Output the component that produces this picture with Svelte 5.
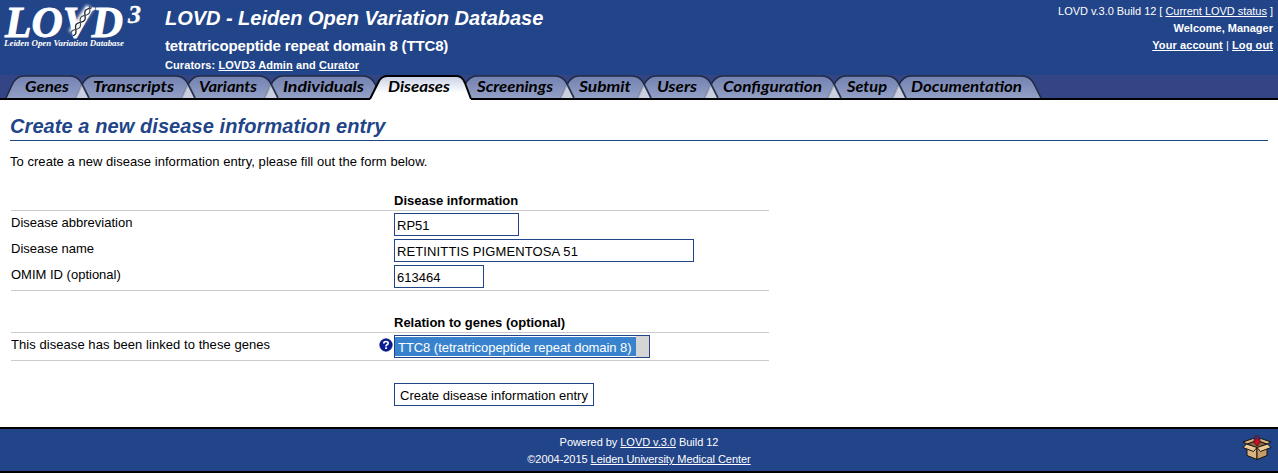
<script>
  const tabs = [
    { label: 'Genes', w: 70, tx: 13, tw: 44 },
    { label: 'Transcripts', w: 106, tx: 11, tw: 81 },
    { label: 'Variants', w: 83, tx: 11, tw: 58 },
    { label: 'Individuals', w: 104, tx: 12, tw: 81 },
    { label: 'Diseases', w: 90, tx: 13, tw: 62, active: true },
    { label: 'Screenings', w: 102, tx: 12, tw: 76 },
    { label: 'Submit', w: 77, tx: 12, tw: 52 },
    { label: 'Users', w: 67, tx: 13, tw: 40 },
    { label: 'Configuration', w: 123, tx: 12, tw: 99 },
    { label: 'Setup', w: 65, tx: 13, tw: 40 },
    { label: 'Documentation', w: 135, tx: 12, tw: 111 }
  ];
  const shape = (w) => `M-6 23 L0 10 Q4 1 12 1 H${w - 12} Q${w - 4} 1 ${w} 9 L${w + 7} 23`;
  const activeShape = (w) => `M-5 24 L3 8 Q6 1 12 1 H${w - 8} Q${w - 3} 1 ${w} 8 L${w + 6} 24`;

  // One strand of the double helix, a sine wave along the right arm of the V.
  const strand = (sign) =>
    Array.from({ length: 41 }, (_, i) => {
      const t = i / 40;
      const off = sign * 2.3 * Math.sin(t * Math.PI * 4 + 0.6);
      return `${(72 + 18.5 * t + off * 0.84).toFixed(1)},${(35 - 28 * t + off * 0.54).toFixed(1)}`;
    }).join(' ');
</script>

<header>
  <svg class="logo" width="165" height="75" viewBox="0 0 165 75">
    <defs><filter id="glow" x="-50%" y="-50%" width="200%" height="200%"><feGaussianBlur stdDeviation="1.4" /></filter></defs>
    <g class="logotext">
      <text class="word" x="5" y="36.5" font-size="45" textLength="118" lengthAdjust="spacingAndGlyphs">LOVD</text>
      <text class="three" x="128" y="23" font-size="25" textLength="13" lengthAdjust="spacingAndGlyphs">3</text>
      <text class="sub" x="4" y="46" font-size="8.5" textLength="120" lengthAdjust="spacingAndGlyphs">Leiden Open Variation Database</text>
    </g>
    <path d="M72 33 L90 7" stroke="#fff" stroke-width="8" filter="url(#glow)" />
    <polyline points={strand(1)} fill="none" stroke="#1d2630" stroke-width="1.3" />
    <polyline points={strand(-1)} fill="none" stroke="#3f5058" stroke-width="1.2" />
  </svg>
  <div class="titles">
    <h1>LOVD - Leiden Open Variation Database</h1>
    <h2>tetratricopeptide repeat domain 8 (TTC8)</h2>
    <p>Curators: <a href="#admin">LOVD3 Admin</a> and <a href="#curator">Curator</a></p>
  </div>
  <div class="status">
    <span class="version">LOVD v.3.0 Build 12 [ <a href="#status">Current LOVD status</a> ]</span><br />
    <b>Welcome, Manager</b><br />
    <span class="account"><b><a href="#account">Your account</a></b> | <b><a href="#logout">Log out</a></b></span>
  </div>
</header>

<nav>
  {#each tabs as tab}
    <a class="tab" class:active={tab.active} href="#{tab.label}" style="width:{tab.w}px">
      <svg width={tab.w} height="25">
        <defs>
          <linearGradient id="g{tab.label}" x1="0" y1="0" x2="0" y2="1">
            <stop offset="0" stop-color={tab.active ? '#c8cfe4' : '#7381b0'} />
            <stop offset={tab.active ? '.7' : '1'} stop-color={tab.active ? '#fff' : '#929fc6'} />
          </linearGradient>
        </defs>
        {#if tab.active}
          <path d={activeShape(tab.w) + ' V25 H-5 Z'} fill="url(#g{tab.label})" />
          <path d={activeShape(tab.w)} fill="none" stroke="#000" stroke-width="2" />
        {:else}
          <path d={shape(tab.w) + ' Z'} fill="url(#g{tab.label})" />
          <path d={shape(tab.w)} fill="none" stroke="#202a43" stroke-width="1.6" />
          {#if tab.label !== 'Genes' && tab.label !== 'Screenings'}
            <path d="M0 10 L-6 23 H7 Z" fill="#cbd0e1" />
            <path d="M0 10 L-6 23" stroke="#a4aabd" stroke-width="1.5" />
            <path d="M0 9 L7 23" stroke="#29334d" stroke-width="1.7" />
          {/if}
        {/if}
        <text x={tab.tx} y="17" textLength={tab.tw} lengthAdjust="spacingAndGlyphs">{tab.label}</text>
      </svg>
    </a>
  {/each}
</nav>

<main>
  <h3>Create a new disease information entry</h3>
  <p class="intro">To create a new disease information entry, please fill out the form below.</p>

  <form onsubmit={(e) => e.preventDefault()}>
    <div class="legend">Disease information</div>
    <section>
      <div class="row"><label for="abbr">Disease abbreviation</label><input id="abbr" style="width:125px" value="RP51" /></div>
      <div class="row"><label for="name">Disease name</label><input id="name" style="width:300px" value="RETINITTIS PIGMENTOSA 51" /></div>
      <div class="row"><label for="omim">OMIM ID (optional)</label><input id="omim" style="width:90px" value="613464" /></div>
    </section>
    <div class="legend second">Relation to genes (optional)</div>
    <section>
      <div class="row">
        <div class="lbl">This disease has been linked to these genes</div>
        <svg class="help" width="14" height="14" viewBox="0 0 14 14">
          <circle cx="7" cy="7" r="6.2" fill="#0a1c96" stroke="#04105e" stroke-width=".8" />
          <path d="M4.8 5.4 Q4.8 3.5 7 3.5 Q9.2 3.5 9.2 5.2 Q9.2 6.2 8 6.8 Q7 7.3 7 8.4" fill="none" stroke="#fff" stroke-width="1.7" />
          <rect x="6.1" y="9.3" width="1.8" height="1.7" fill="#fff" />
        </svg>
        <div class="list"><div class="option">TTC8 (tetratricopeptide repeat domain 8)</div><div class="track"></div></div>
      </div>
    </section>
    <button>Create disease information entry</button>
  </form>
</main>

<footer>
  <div class="credits">
    Powered by <a href="#lovd">LOVD v.3.0</a> Build 12<br />
    ©2004-2015 <a href="#lumc">Leiden University Medical Center</a>
  </div>
  <svg class="box" width="30" height="28" viewBox="0 0 30 28">
    <g stroke="#17120f" stroke-width="1" stroke-linejoin="round">
      <path d="M5 10 L15 6 L25 10 L15 14Z" fill="#8a6740" />
      <path d="M5 11 L15 14 V25.5 L5 21.5Z" fill="#dab383" />
      <path d="M15 14 L25 11 V21.5 L15 25.5Z" fill="#c79c68" />
      <path d="M5 10 L1 8 L11 4.500 L15 6.500Z" fill="#d9b27f" />
      <path d="M25 10 L29 8 L19 4.500 L15 6.500Z" fill="#d9b27f" />
      <path d="M4.500 10 L15 13.500 L11.500 17.500 L1 13.5Z" fill="#edc897" />
      <path d="M25.500 10 L15 13.500 L18.500 17.500 L29 13.5Z" fill="#edc897" />
    </g>
    <path d="M13 2h4v5h2l-4 5-4-5H13z" fill="#d50b20" stroke="#400a20" stroke-width=".8" />
    <path d="M13 2h4v3.500h-4z" fill="#63204f" />
  </svg>
</footer>

<style>
  :global(body) { font: 13px/18px "Liberation Sans", Arial, sans-serif; color: #000; background: #fff; }
  header { height: 75px; background: #224488; color: #fff; display: flex; font-size: 11px; line-height: 17px; }
  header a, footer a { color: #fff; text-decoration: underline; }
  .logo { flex: none; }
  .logotext { fill: #fff; font-family: "Liberation Serif", serif; font-weight: bold; font-style: italic; }
  .word { stroke: #fff; stroke-width: .9px; }
  .three { stroke: #fff; stroke-width: .3px; }
  .titles { flex: 1; }
  h1 { font-size: 20px; line-height: 24px; font-style: italic; margin: 6px 0 0; letter-spacing: -.03px; }
  h2 { font-size: 15px; line-height: 18px; margin: 7px 0 0; letter-spacing: -.15px; }
  .titles p { font-weight: bold; margin: 2px 0 0; line-height: 17px; letter-spacing: .08px; }
  .status { text-align: right; padding: 3px 5px 0 0; }
  .version { letter-spacing: -.03px; }
  .account { letter-spacing: .09px; }
  nav { height: 23px; background: #344585; border-bottom: 2px solid #000; display: flex; padding-left: 12px; }
  .tab { flex: none; height: 23px; color: #000; position: relative; }
  .tab svg { display: block; overflow: visible; }
  .tab text { font: italic 700 16px Lato, sans-serif; }
  .active { z-index: 1; }
  main { height: 327px; padding: 0 10px; box-sizing: border-box; display: flow-root; }
  h3 { color: #224488; font-size: 20px; line-height: 24px; font-style: italic; margin: 14px 0 0; padding-bottom: 2px; border-bottom: 1px solid #224488; letter-spacing: .08px; }
  .intro { margin: 12px 0 0; letter-spacing: .04px; }
  form { width: 758px; margin: 20px 0 0 1px; }
  .legend { font-weight: bold; padding-left: 383px; height: 19px; line-height: 19px; }
  .second { margin-top: 22px; }
  section { border: solid #ccc; border-width: 1px 0; padding-top: 2px; }
  .row { display: flex; height: 26px; }
  .row:last-child { height: 25px; }
  .row label { width: 383px; line-height: 19px; }
  .lbl { width: 368px; line-height: 19px; letter-spacing: .06px; }
  .help { margin: 3px 1px 0 0; }
  input { box-sizing: border-box; height: 23px; border: 1px solid #224488; padding: 3px 2px 1px; font: inherit; }
  #name { letter-spacing: .12px; }
  .list { width: 254px; height: 21px; border: 1px solid #224488; display: flex; }
  .option { background: #3983ce; color: #fff; width: 238px; height: 19px; margin-top: 1px; padding-left: 3px; line-height: 21px; white-space: nowrap; letter-spacing: -.05px; }
  .track { background: #d5d5d5; flex: 1; }
  button { display: block; margin: 22px 0 0 383px; width: 200px; height: 23px; border: 1px solid #224488; background: #fff; padding: 2px 0 0; font: inherit; white-space: nowrap; color: #000; }
  footer { box-sizing: border-box; height: 46px; border: solid #000; border-width: 2px 0; background: #224488; color: #fff; font-size: 11px; line-height: 17px; display: grid; grid-template-columns: 50px 1fr 50px; }
  .credits { grid-column: 2; text-align: center; padding-top: 5px; letter-spacing: -.04px; }
  .box { margin: 5px 0 0 14px; }
</style>
